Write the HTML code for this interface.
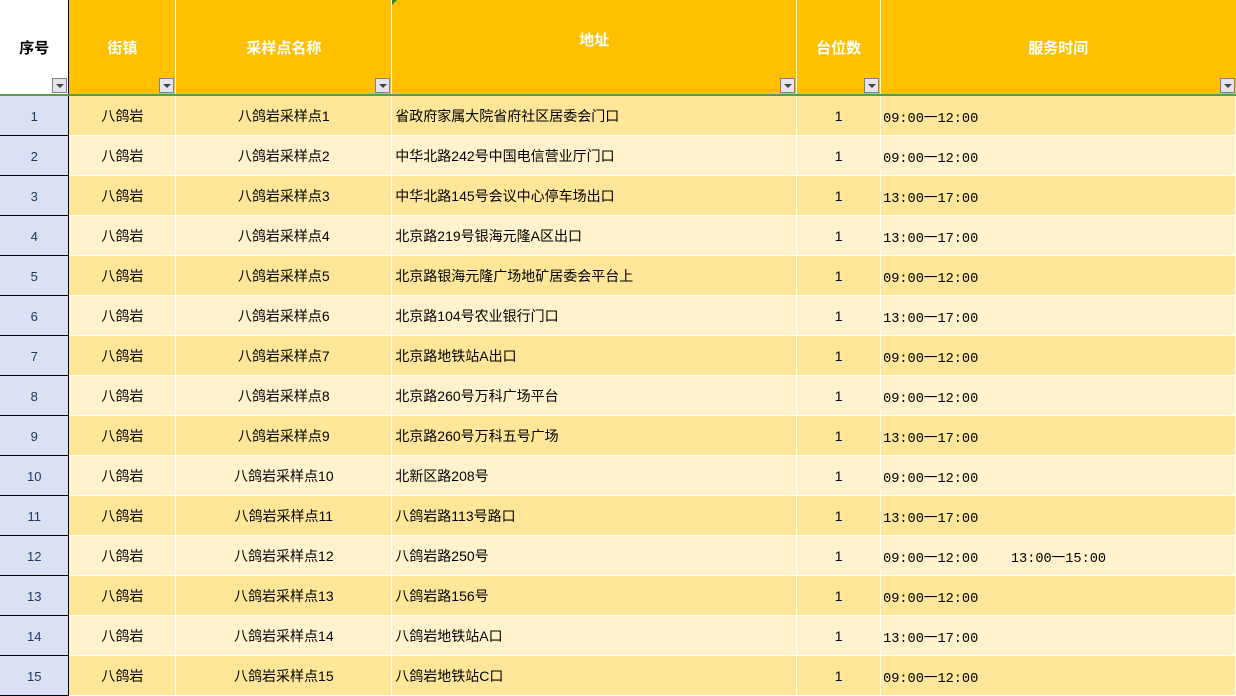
<!DOCTYPE html>
<html><head><meta charset="utf-8"><style>
*{margin:0;padding:0;box-sizing:border-box}
body{width:1236px;height:695px;overflow:hidden;background:#fff;font-family:"Liberation Sans","Noto Sans CJK SC",sans-serif;font-size:14px;color:#000;position:relative}
table{border-collapse:collapse;table-layout:fixed;position:absolute;left:0;top:0}
td{height:40px;border:1px solid #fff;white-space:nowrap;overflow:hidden;text-align:center;vertical-align:middle;padding-top:2px}
tr.o td{background:#FFE699}
tr.e td{background:#FFF2CC}
td.i{background:#D9E1F2 !important;color:#1f3864;border:1px solid #000;border-left:none;font-size:13px}
td.l{text-align:left;padding-left:3px}
td.t{text-align:left;padding-left:2px;font-family:"Liberation Mono","Noto Sans CJK SC",monospace;font-size:13.6px}
th{height:95px;background:#FFC000;color:#fff;font-weight:bold;font-size:15px;border-left:1px solid #fff;border-bottom:2px solid #5b9b4a;position:relative;font-family:"Noto Sans CJK SC",sans-serif}
th.i{background:#fff;color:#000;border-left:none;border-right:1px solid #000}
th span{display:block}
.dd{position:absolute;right:1px;bottom:1px;width:15px;height:15px;background:#e4e4ec;border:1px solid #808080}
.dd:after{content:"";position:absolute;left:3px;top:5px;border-left:4px solid transparent;border-right:4px solid transparent;border-top:4px solid #444}
</style></head><body>
<table>
<colgroup><col style="width:69px"><col style="width:107px"><col style="width:216px"><col style="width:405px"><col style="width:84px"><col style="width:355px"></colgroup>
<tr><th class="i"><span>序号</span><div class="dd"></div></th><th><span>街镇</span><div class="dd"></div></th><th><span>采样点名称</span><div class="dd"></div></th><th><span style="margin-top:-16px">地址</span><div class="dd"></div></th><th><span>台位数</span><div class="dd"></div></th><th><span>服务时间</span><div class="dd"></div></th></tr>
<tr class="o"><td class="i">1</td><td>八鸽岩</td><td>八鸽岩采样点1</td><td class="l">省政府家属大院省府社区居委会门口</td><td>1</td><td class="t">09:00一12:00</td></tr>
<tr class="e"><td class="i">2</td><td>八鸽岩</td><td>八鸽岩采样点2</td><td class="l">中华北路242号中国电信营业厅门口</td><td>1</td><td class="t">09:00一12:00</td></tr>
<tr class="o"><td class="i">3</td><td>八鸽岩</td><td>八鸽岩采样点3</td><td class="l">中华北路145号会议中心停车场出口</td><td>1</td><td class="t">13:00一17:00</td></tr>
<tr class="e"><td class="i">4</td><td>八鸽岩</td><td>八鸽岩采样点4</td><td class="l">北京路219号银海元隆A区出口</td><td>1</td><td class="t">13:00一17:00</td></tr>
<tr class="o"><td class="i">5</td><td>八鸽岩</td><td>八鸽岩采样点5</td><td class="l">北京路银海元隆广场地矿居委会平台上</td><td>1</td><td class="t">09:00一12:00</td></tr>
<tr class="e"><td class="i">6</td><td>八鸽岩</td><td>八鸽岩采样点6</td><td class="l">北京路104号农业银行门口</td><td>1</td><td class="t">13:00一17:00</td></tr>
<tr class="o"><td class="i">7</td><td>八鸽岩</td><td>八鸽岩采样点7</td><td class="l">北京路地铁站A出口</td><td>1</td><td class="t">09:00一12:00</td></tr>
<tr class="e"><td class="i">8</td><td>八鸽岩</td><td>八鸽岩采样点8</td><td class="l">北京路260号万科广场平台</td><td>1</td><td class="t">09:00一12:00</td></tr>
<tr class="o"><td class="i">9</td><td>八鸽岩</td><td>八鸽岩采样点9</td><td class="l">北京路260号万科五号广场</td><td>1</td><td class="t">13:00一17:00</td></tr>
<tr class="e"><td class="i">10</td><td>八鸽岩</td><td>八鸽岩采样点10</td><td class="l">北新区路208号</td><td>1</td><td class="t">09:00一12:00</td></tr>
<tr class="o"><td class="i">11</td><td>八鸽岩</td><td>八鸽岩采样点11</td><td class="l">八鸽岩路113号路口</td><td>1</td><td class="t">13:00一17:00</td></tr>
<tr class="e"><td class="i">12</td><td>八鸽岩</td><td>八鸽岩采样点12</td><td class="l">八鸽岩路250号</td><td>1</td><td class="t">09:00一12:00&nbsp;&nbsp;&nbsp;&nbsp;13:00一15:00</td></tr>
<tr class="o"><td class="i">13</td><td>八鸽岩</td><td>八鸽岩采样点13</td><td class="l">八鸽岩路156号</td><td>1</td><td class="t">09:00一12:00</td></tr>
<tr class="e"><td class="i">14</td><td>八鸽岩</td><td>八鸽岩采样点14</td><td class="l">八鸽岩地铁站A口</td><td>1</td><td class="t">13:00一17:00</td></tr>
<tr class="o"><td class="i">15</td><td>八鸽岩</td><td>八鸽岩采样点15</td><td class="l">八鸽岩地铁站C口</td><td>1</td><td class="t">09:00一12:00</td></tr>
</table>
<div style="position:absolute;left:392px;top:0;border-top:5px solid #2a8a2a;border-right:5px solid transparent"></div>
</body></html>
